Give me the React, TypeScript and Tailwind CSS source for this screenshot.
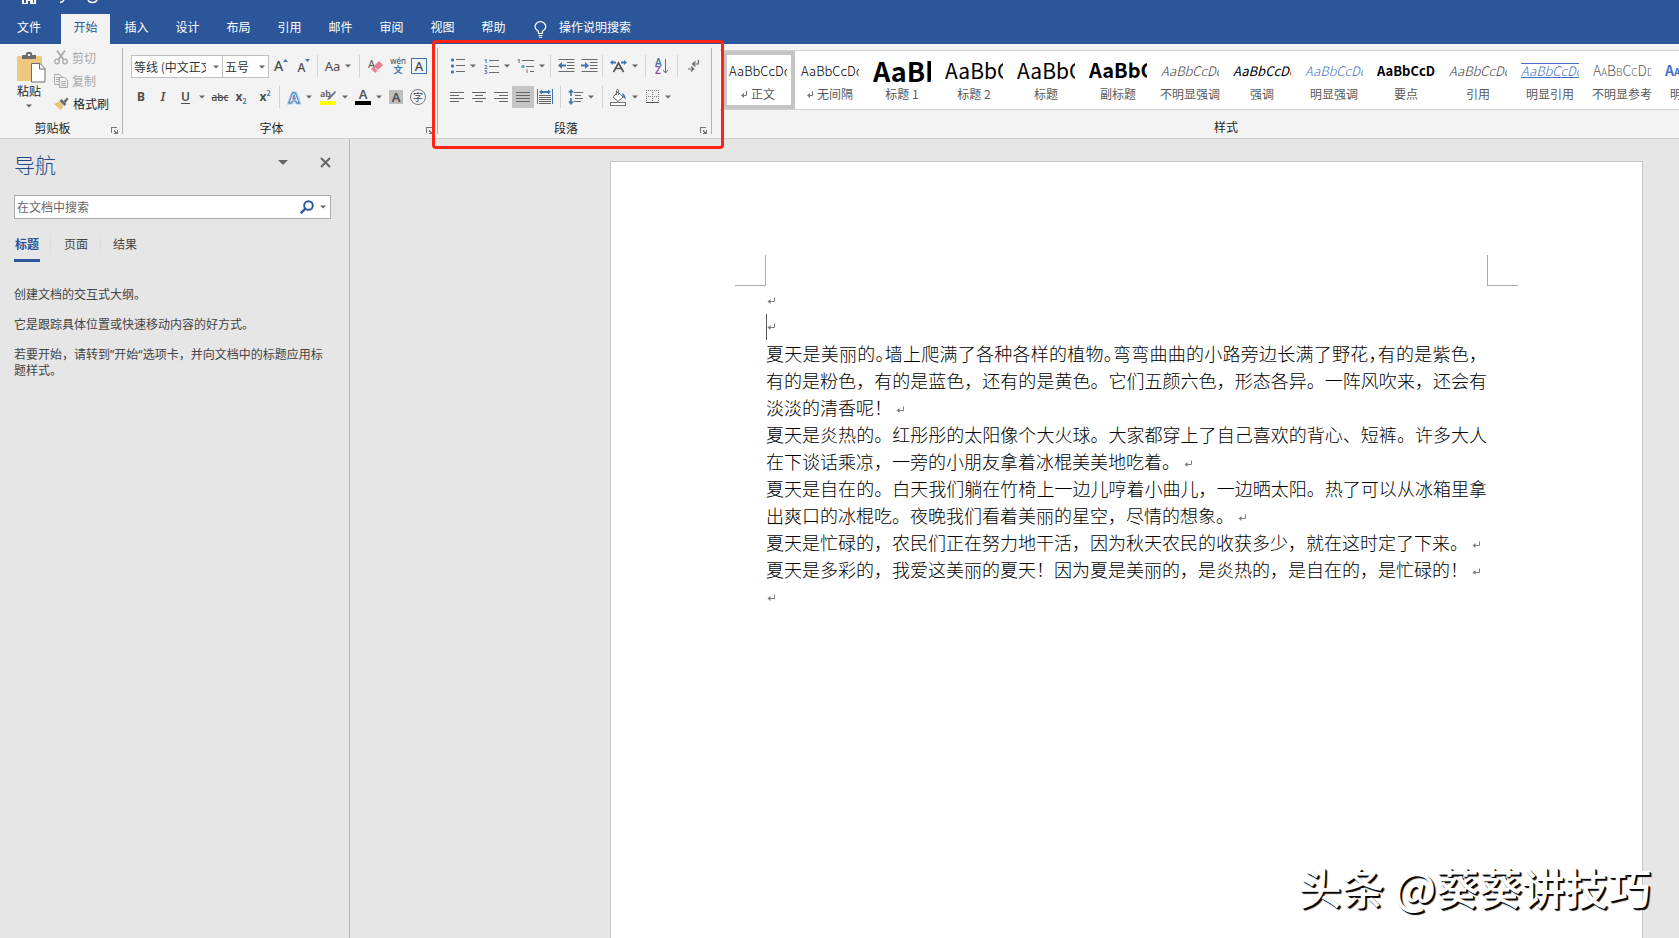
import type { ReactNode } from "react";

const BLUE = "#3f76b0";
const GREY = "#6a6a6a";

function Caret({ className = "" }: { className?: string }) {
  return (
    <svg width="6" height="4" viewBox="0 0 6 4" className={`shrink-0 ${className}`} aria-hidden="true">
      <path d="M0 0.5h6L3 3.5z" fill="#666" />
    </svg>
  );
}

function Tool({ label, width, children, split, active }: { label: string; width: string; children: ReactNode; split?: boolean; active?: boolean }) {
  return (
    <button
      type="button"
      aria-label={label}
      className={`flex h-[22px] shrink-0 items-center justify-center ${split ? "gap-[5px]" : ""} ${width} ${active ? "bg-[#c5c5c5]" : ""}`}
    >
      {children}
      {split && <Caret />}
    </button>
  );
}

function Sep({ width = "w-1" }: { width?: string }) {
  return (
    <span className={`flex h-[22px] shrink-0 justify-center ${width}`}>
      <span className="w-px bg-[#d2d2d2]" />
    </span>
  );
}

function Launcher({ label }: { label: string }) {
  return (
    <button type="button" aria-label={label} className="mr-1 mt-1 shrink-0">
      <svg width="7" height="7" viewBox="0 0 7 7" shapeRendering="crispEdges" aria-hidden="true">
        <path d="M0 0h6v1H1v5H0z" fill="#777" />
        <path d="M3 3h1v1h1v1h1V3h1v4H3V6h1V5H3z" fill="#777" />
      </svg>
    </button>
  );
}

function GroupLabel({ children }: { children: string }) {
  return (
    <div className="flex h-[18px] shrink-0 items-center">
      <span className="flex-1 pr-[6px] text-center">{children}</span>
      <Launcher label={`${children}设置`} />
    </div>
  );
}

function LinesIcon({ rows, width = 14 }: { rows: [number, number][]; width?: number }) {
  return (
    <svg width={width} height="14" viewBox={`0 0 ${width} 14`} shapeRendering="crispEdges" aria-hidden="true">
      {rows.map(([x, w], i) => (
        <rect key={i} x={x} y={2 + i * 3} width={w} height="1" fill="#666" />
      ))}
    </svg>
  );
}

function ListIcon({ kind }: { kind: "bullet" | "number" | "multi" }) {
  if (kind === "bullet") {
    return (
      <svg width="14" height="16" viewBox="0 0 14 16" aria-hidden="true">
        {[2, 8, 14].map((y) => (
          <g key={y}>
            <rect x="0" y={y - 1.5} width="3" height="3" rx="1" fill={BLUE} />
            <rect x="5" y={y - 1} width="9" height="1" fill={GREY} />
          </g>
        ))}
      </svg>
    );
  }
  if (kind === "number") {
    return (
      <svg width="15" height="16" viewBox="0 0 15 16" aria-hidden="true">
        {["1", "2", "3"].map((n, i) => (
          <g key={n}>
            <text x="0" y={5 + i * 5.5} fontSize="6" fontWeight="700" fontFamily="Noto Sans, sans-serif" fill={BLUE}>{n}</text>
            <rect x="5" y={2 + i * 6} width="10" height="1" fill={GREY} />
          </g>
        ))}
      </svg>
    );
  }
  return (
    <svg width="17" height="16" viewBox="0 0 17 16" aria-hidden="true">
      <g fontSize="6" fontWeight="700" fontFamily="Noto Sans, sans-serif" fill={BLUE}>
        <text x="0" y="5">1</text>
        <text x="4" y="10">a</text>
        <text x="9" y="15">i</text>
      </g>
      <path d="M5 2.500h12M9 8.500h8M13 13.500h4" stroke={GREY} />
    </svg>
  );
}

function IndentIcon({ out }: { out?: boolean }) {
  return (
    <svg width="17" height="14" viewBox="0 0 17 14" aria-hidden="true">
      <path d="M0.500 0.500h16M9 3.500h7.500M9 6.500h7.500M9 9.500h7.500M0.500 12.500h16" stroke={GREY} />
      {out ? <path d="M0 6.500l4-3.500v2.500h4v2H4V10z" fill={BLUE} /> : <path d="M8 6.500L4 3v2.500H0v2h4V10z" fill={BLUE} />}
    </svg>
  );
}

function ParagraphMark({ className = "" }: { className?: string }) {
  return (
    <svg width="8" height="8" viewBox="0 0 8 8" className={`inline-block ${className}`} aria-hidden="true">
      <path d="M7.500 0.500v4H2" fill="none" stroke="#7d7d7d" />
      <path d="M0.500 4.500L3.500 2v5z" fill="#7d7d7d" />
    </svg>
  );
}

const tabs = ["插入", "设计", "布局", "引用", "邮件", "审阅", "视图", "帮助"];

const styleItems: { name: string; sample: string; mark?: boolean }[] = [
  { name: "正文", sample: "text-[13px] font-light text-black", mark: true },
  { name: "无间隔", sample: "text-[13px] font-light text-black", mark: true },
  { name: "标题 1", sample: "text-[27px] font-bold text-black" },
  { name: "标题 2", sample: "text-[21px] font-normal text-black" },
  { name: "标题", sample: "text-[21px] font-normal text-black" },
  { name: "副标题", sample: "text-[20px] font-bold text-black" },
  { name: "不明显强调", sample: "text-[13px] font-light italic text-[#404040]" },
  { name: "强调", sample: "text-[13px] font-normal italic text-black" },
  { name: "明显强调", sample: "text-[13px] font-light italic text-[#4472c4]" },
  { name: "要点", sample: "text-[13px] font-bold text-black" },
  { name: "引用", sample: "text-[13px] font-light italic text-[#404040]" },
  { name: "明显引用", sample: "text-[13px] font-light italic text-[#4472c4] border-y border-[#4472c4]" },
  { name: "不明显参考", sample: "text-[14px] font-light text-[#5a5a5a] [font-variant-caps:small-caps]" },
  { name: "明显参考", sample: "text-[14px] font-bold text-[#4472c4] [font-variant-caps:small-caps]" },
];

function Half({ children }: { children: string }) {
  return <span className="[font-feature-settings:'halt']">{children}</span>;
}

function TitleAndTabs() {
  return (
    <header className="bg-[#2b579a] text-white">
      <div className="flex h-[14px] items-start pl-[22px]">
        <svg width="80" height="4" viewBox="0 0 80 4" aria-hidden="true">
          <path d="M0 0h2v3h2V0h7v3h1V0h2v4H0z" fill="#fff" />
          <rect x="6" y="1" width="2" height="3" fill="#2b579a" />
          <path d="M42 0q-1 2-4 2.500" fill="none" stroke="#fff" strokeWidth="1.500" />
          <path d="M66 0q1 2.500 4.500 2.500T75 0" fill="none" stroke="#fff" strokeWidth="1.500" />
        </svg>
      </div>
      <nav className="flex h-[30px] items-stretch gap-[2px]">
        <button type="button" className="w-[59px] pb-1 pr-px">文件</button>
        <button type="button" className="w-[49px] bg-[#f3f3f3] pb-1 text-[#2b579a]">开始</button>
        {tabs.map((t) => (
          <button key={t} type="button" className="w-[49px] pb-1">{t}</button>
        ))}
        <button type="button" className="ml-[6px] flex items-center gap-3 px-2 pb-1">
          <svg width="13" height="17" viewBox="0 0 13 17" fill="none" stroke="#fff" className="mt-1" aria-hidden="true">
            <path d="M4.500 12.500V10.500C3 9 1 8 1 5.800A5.300 5 0 0 1 11.800 5.800C11.800 8 9.800 9 8.300 10.500v2z" strokeWidth="1.200" />
            <path d="M4.500 14.500h4M5 16.300h3" />
          </svg>
          操作说明搜索
        </button>
      </nav>
    </header>
  );
}

function ClipboardGroup() {
  return (
    <section className="mb-1 mt-1 flex w-[123px] shrink-0 flex-col border-r border-[#b1b1b1]">
      <div className="flex h-[71px] shrink-0">
        <button type="button" className="flex w-[54px] flex-col items-center pl-2 pt-1">
          <svg width="29" height="32" viewBox="0 0 29 32" className="shrink-0" aria-hidden="true">
            <rect x="0" y="4" width="25" height="25" rx="1" fill="#edc87e" />
            <path d="M5 7V3h4V1.500Q9 0 10.500 0h3Q15 0 15 1.500V3h4v4z" fill="#6d6d6d" />
            <rect x="11" y="2" width="2" height="2" fill="#f3f3f3" />
            <path d="M14.500 11.500h8.500l5 5v13.500H14.500z" fill="#fff" stroke="#6d6d6d" />
            <path d="M22.500 11.500v5.500H28" fill="none" stroke="#6d6d6d" />
          </svg>
          <span className="-mt-[2px] mr-1 leading-[18px]">粘贴</span>
          <Caret className="mr-1 mt-1" />
        </button>
        <div className="-mt-[2px] flex flex-col text-[#262626]">
          <button type="button" className="flex h-[23px] items-center gap-1 text-[#a9a9a9]">
            <svg width="14" height="15" viewBox="0 0 14 15" fill="none" stroke="#a9a9a9" aria-hidden="true">
              <path d="M3 0.500L9.500 9.500M11 0.500L4.500 9.500" strokeWidth="1.800" />
              <circle cx="3" cy="11.500" r="2.300" strokeWidth="1.300" />
              <circle cx="11" cy="11.500" r="2.300" strokeWidth="1.300" />
            </svg>
            剪切
          </button>
          <button type="button" className="flex h-[23px] items-center gap-1 text-[#a9a9a9]">
            <svg width="14" height="14" viewBox="0 0 14 14" fill="#f3f3f3" stroke="#a9a9a9" aria-hidden="true">
              <path d="M0.500 0.500h5l2.500 2v8H0.500zM2 3.500h4M2 5.500h3M2 7.500h3" />
              <path d="M5.500 3.500h5l3 2.500v7.500h-8zM7 7.500h5M7 9.500h5M7 11.500h5" />
            </svg>
            复制
          </button>
          <button type="button" className="flex h-[23px] items-center gap-1">
            <svg width="15" height="14" viewBox="0 0 15 14" aria-hidden="true">
              <path d="M0 7l5.500-2.500 4 4.500L7 13.500z" fill="#edc27c" />
              <path d="M5.500 4L7.500 2l5 5-2 2z" fill="#6d6d6d" />
              <path d="M9.500 4L13 0.500l1.500 1.500L11.500 6z" fill="#6d6d6d" />
            </svg>
            格式刷
          </button>
        </div>
      </div>
      <GroupLabel>剪贴板</GroupLabel>
    </section>
  );
}

function FontGroup() {
  const glyph = "font-['Noto_Sans'] text-[#4d4d4d] leading-none";
  return (
    <section className="mb-1 mt-1 flex w-[315px] shrink-0 flex-col border-r border-[#b1b1b1]">
      <div className="flex h-[71px] shrink-0 flex-col gap-[8px] pl-2 pt-[7px]">
        <div className="flex h-[23px] items-start">
          <span className="relative flex shrink-0 items-center">
            <select aria-label="字体" className="h-[23px] w-[92px] appearance-none border border-[#bfbfbf] bg-white pl-[2px] pr-4 text-[#333]">
              <option>等线 (中文正文)</option>
            </select>
            <Caret className="pointer-events-none absolute right-1" />
          </span>
          <span className="relative -ml-px flex shrink-0 items-center">
            <select aria-label="字号" className="h-[23px] w-[47px] appearance-none border border-[#bfbfbf] bg-white pl-[2px] pr-4 text-[#333]">
              <option>五号</option>
            </select>
            <Caret className="pointer-events-none absolute right-1" />
          </span>
          <Tool label="增大字号" width="w-6">
            <span className={`${glyph} text-[14px] font-medium`}>A</span>
            <svg width="5" height="3" viewBox="0 0 5 3" className="mb-[11px]" aria-hidden="true"><path d="M0 3h5L2.500 0z" fill={BLUE} /></svg>
          </Tool>
          <Tool label="减小字号" width="w-[22px]">
            <span className={`${glyph} mt-1 text-[12px] font-medium`}>A</span>
            <svg width="5" height="3" viewBox="0 0 5 3" className="mb-[11px]" aria-hidden="true"><path d="M0 0h5L2.500 3z" fill={BLUE} /></svg>
          </Tool>
          <Sep />
          <Tool label="更改大小写" width="w-[38px]" split>
            <span className={`${glyph} text-[13px]`}>Aa</span>
          </Tool>
          <Sep />
          <Tool label="清除所有格式" width="w-7">
            <svg width="15" height="16" viewBox="0 0 15 16" aria-hidden="true">
              <text x="0" y="10" fontSize="11" fontFamily="Noto Sans, sans-serif" fill="#555">A</text>
              <path d="M11 3l4 4-5 5-4-4z" fill="#e77e8f" />
              <path d="M5.500 8.500l4 4L7.500 15 3 11z" fill="#e77e8f" />
            </svg>
          </Tool>
          <Tool label="拼音指南" width="w-[18px]">
            <svg width="18" height="20" viewBox="0 0 18 20" className="shrink-0" aria-hidden="true">
              <text x="9" y="8" textAnchor="middle" fontSize="8" fontFamily="Noto Sans, sans-serif" fill="#444">wén</text>
              <text x="9" y="17" textAnchor="middle" fontSize="9" fontWeight="700" fontFamily="Noto Sans CJK SC, sans-serif" fill={BLUE}>文</text>
            </svg>
          </Tool>
          <Tool label="字符边框" width="w-6">
            <span className={`${glyph} flex size-4 items-center justify-center border border-[#3f76b0] text-[13px] font-medium`}>A</span>
          </Tool>
        </div>
        <div className="flex h-[23px] items-start">
          <Tool label="加粗" width="w-5"><span className={`${glyph} text-[12px] font-bold`}>B</span></Tool>
          <Tool label="倾斜" width="w-6"><span className={`${glyph} text-[12px] font-semibold italic`}>I</span></Tool>
          <Tool label="下划线" width="w-9" split><span className={`${glyph} mr-1 border-b border-[#4d4d4d] text-[12px] font-semibold`}>U</span></Tool>
          <Tool label="删除线" width="w-[18px]"><span className={`${glyph} text-[10px] font-medium line-through`}>abc</span></Tool>
          <Tool label="下标" width="w-6">
            <span className={`${glyph} text-[12px] font-bold`}>x</span>
            <span className="mt-2 text-[7px] font-bold leading-none text-[#3f76b0]">2</span>
          </Tool>
          <Tool label="上标" width="w-6">
            <span className={`${glyph} text-[12px] font-bold`}>x</span>
            <span className="mb-2 text-[7px] font-bold leading-none text-[#3f76b0]">2</span>
          </Tool>
          <Sep />
          <Tool label="文本效果" width="w-9" split>
            <svg width="14" height="15" viewBox="0 0 14 15" aria-hidden="true">
              <text x="7" y="13" textAnchor="middle" fontSize="15" fontWeight="700" fontFamily="Noto Sans, sans-serif" fill="#fff" stroke="#a9c9e8" strokeWidth="3" paintOrder="stroke">A</text>
              <text x="7" y="13" textAnchor="middle" fontSize="15" fontWeight="700" fontFamily="Noto Sans, sans-serif" fill="#fff" stroke={BLUE} strokeWidth="0.900">A</text>
            </svg>
          </Tool>
          <Tool label="突出显示" width="w-[34px]" split>
            <svg width="17" height="16" viewBox="0 0 17 16" aria-hidden="true">
              <text x="0" y="8" fontSize="9" fontWeight="600" fontFamily="Noto Sans, sans-serif" fill="#555">ab</text>
              <path d="M15 2L9 8l-2 3 3-1 6-7z" fill="#6d6d6d" />
              <rect x="0" y="12" width="16" height="4" fill="#ff0" />
            </svg>
          </Tool>
          <Tool label="字体颜色" width="w-[34px]" split>
            <svg width="16" height="16" viewBox="0 0 16 16" aria-hidden="true">
              <text x="8" y="10" textAnchor="middle" fontSize="13" fontWeight="600" fontFamily="Noto Sans, sans-serif" fill="#555">A</text>
              <rect x="0" y="12" width="16" height="4" fill="#000" />
            </svg>
          </Tool>
          <Tool label="字符底纹" width="w-[22px]">
            <span className={`${glyph} flex size-[14px] items-center justify-center bg-[#bdbdbd] text-[13px] font-semibold`}>A</span>
          </Tool>
          <Tool label="带圈字符" width="w-[22px]">
            <span className="flex size-4 shrink-0 items-center justify-center rounded-full border border-[#777] text-[10px] leading-none text-[#444]">字</span>
          </Tool>
        </div>
      </div>
      <GroupLabel>字体</GroupLabel>
    </section>
  );
}

function ParagraphGroup() {
  return (
    <section className="relative mb-1 mt-1 flex w-[274px] shrink-0 flex-col border-r border-[#b1b1b1]">
      <div className="pointer-events-none absolute -bottom-[15px] -left-[6px] -right-[13px] -top-2 z-10 rounded border-[3px] border-[#ff2316]" />
      <div className="flex h-[71px] shrink-0 flex-col gap-[8px] pl-2 pt-[7px]">
        <div className="flex h-[23px] items-start">
          <Tool label="项目符号" width="w-[34px]" split><ListIcon kind="bullet" /></Tool>
          <Tool label="编号" width="w-[34px]" split><ListIcon kind="number" /></Tool>
          <Tool label="多级列表" width="w-[34px]" split><ListIcon kind="multi" /></Tool>
          <Sep width="w-[5px]" />
          <Tool label="减少缩进量" width="w-[26px]"><IndentIcon out /></Tool>
          <Tool label="增加缩进量" width="w-5"><IndentIcon /></Tool>
          <Sep width="w-[7px]" />
          <Tool label="中文版式" width="w-9" split>
            <svg width="17" height="14" viewBox="0 0 17 14" aria-hidden="true">
              <path d="M3.500 13L8.500 4l5 9M5.500 9.500h6" fill="none" stroke="#555" strokeWidth="1.700" />
              <path d="M0 3.500L3 1v1.500h3v2H3V6zM17 3.500L14 1v1.500h-3v2h3V6z" fill={BLUE} />
            </svg>
          </Tool>
          <Sep width="w-[7px]" />
          <Tool label="排序" width="w-[26px]">
            <svg width="14" height="17" viewBox="0 0 14 17" aria-hidden="true">
              <text x="0" y="8" fontSize="10" fontWeight="600" fontFamily="Noto Sans, sans-serif" fill={BLUE}>A</text>
              <text x="0" y="16" fontSize="10" fontWeight="600" fontFamily="Noto Sans, sans-serif" fill="#8a50b0">Z</text>
              <path d="M10.500 1v14M8 12l2.500 3 2.500-3" fill="none" stroke={GREY} />
            </svg>
          </Tool>
          <Sep width="w-[5px]" />
          <Tool label="显示编辑标记" width="w-[26px]">
            <svg width="11" height="12" viewBox="0 0 11 12" fill="none" stroke="#666" strokeWidth="1.200" aria-hidden="true">
              <path d="M10.400 0v4H5M7.500 1.500L4.500 4l3 2.500M0 9h5M3 6.500L5.700 9 3 11.500" />
            </svg>
          </Tool>
        </div>
        <div className="flex h-[23px] items-start">
          <Tool label="左对齐" width="w-[22px]"><LinesIcon rows={[[0, 14], [0, 9], [0, 14], [0, 9]]} /></Tool>
          <Tool label="居中" width="w-[22px]"><LinesIcon rows={[[0, 14], [3, 8], [0, 14], [3, 8]]} /></Tool>
          <Tool label="右对齐" width="w-[22px]"><LinesIcon rows={[[0, 14], [5, 9], [0, 14], [5, 9]]} /></Tool>
          <Tool label="两端对齐" width="w-[22px]" active><LinesIcon rows={[[0, 14], [0, 14], [0, 14], [0, 14]]} /></Tool>
          <Tool label="分散对齐" width="w-[22px]">
            <svg width="16" height="16" viewBox="0 0 16 16" aria-hidden="true">
              <path d="M0.500 0v15M15.500 0v15" stroke={BLUE} />
              <path d="M2 3l3-2.500V2h6V0.500L14 3l-3 2.500V4H5v1.500z" fill={BLUE} />
              <path d="M2 6.500h12M2 8.500h12M2 10.500h12M2 12.500h12M2 14.500h12" stroke="#666" />
            </svg>
          </Tool>
          <Sep width="w-2" />
          <Tool label="行距" width="w-[34px]" split>
            <svg width="15" height="16" viewBox="0 0 15 16" aria-hidden="true">
              <path d="M3 0l3 3.500H3.800V7H2.200V3.500H0zM3 16l3-3.500H3.800V9H2.200v3.500H0z" fill={BLUE} />
              <path d="M6 3.500h9M7 6.500h6M7 9.500h8M6 12.500h7" stroke={GREY} />
            </svg>
          </Tool>
          <Sep width="w-2" />
          <Tool label="底纹" width="w-[35px]" split>
            <svg width="17" height="17" viewBox="0 0 17 17" aria-hidden="true">
              <path d="M3 8l5-5 5 5-5 4.500z" fill="#fff" stroke={GREY} />
              <path d="M6.500 6V1.500Q6.500 0.500 7.500 0.500T8.500 1.500V6" fill="none" stroke={GREY} />
              <path d="M12 4q4 1.500 3.500 6.500L13 8z" fill={BLUE} />
              <rect x="0.500" y="13.500" width="15" height="3" fill="#fff" stroke="#777" />
            </svg>
          </Tool>
          <Tool label="边框" width="w-[35px]" split>
            <svg width="14" height="14" viewBox="0 0 14 14" aria-hidden="true">
              <path d="M0 0.500h13M0 6.500h13M0.500 0v13M6.500 0v13M12.500 0v13" stroke="#777" strokeDasharray="1 1" />
              <path d="M0 12.500h13" stroke="#555" />
            </svg>
          </Tool>
        </div>
      </div>
      <GroupLabel>段落</GroupLabel>
    </section>
  );
}

function StylesGroup() {
  return (
    <section className="flex min-w-0 flex-1 flex-col overflow-hidden pt-[6px]">
      <div className="ml-2 flex h-[60px] shrink-0 border-y border-[#d0d0d0] bg-white pl-[3px]">
        {styleItems.map((s, i) => (
          <button
            key={s.name}
            type="button"
            className={`flex h-[58px] w-[72px] shrink-0 flex-col items-center border-4 pr-[2px] ${i === 0 ? "border-[#c5c5c5]" : "border-transparent"}`}
          >
            <span className="mt-px flex h-7 w-[58px] shrink-0 items-center">
              <span className={`w-full overflow-hidden whitespace-nowrap text-left leading-none ${s.sample}`}>AaBbCcDd</span>
            </span>
            <span className="flex h-5 items-center gap-1 whitespace-nowrap text-[#5a5a5a]">
              {s.mark && (
                <svg width="6" height="7" viewBox="0 0 6 7" aria-hidden="true">
                  <path d="M5.500 0v4.500H2" fill="none" stroke="#777" />
                  <path d="M0 4.500L3 2v5z" fill="#777" />
                </svg>
              )}
              {s.name}
            </span>
          </button>
        ))}
      </div>
      <div className="mt-2 flex h-[18px] items-center justify-center pl-[61px]">样式</div>
    </section>
  );
}

function NavPane() {
  return (
    <aside className="flex w-[350px] shrink-0 flex-col border-r border-[#b8b8b8] pl-[14px] pr-[18px] pt-[11px] text-[#444]">
      <div className="flex h-7 items-center">
        <h2 className="flex-1 text-[21px] font-light leading-7 text-[#1e4a8a]">导航</h2>
        <button type="button" aria-label="任务窗格选项" className="mb-1 mr-8">
          <svg width="10" height="5" viewBox="0 0 10 5" aria-hidden="true"><path d="M0 0h10L5 5z" fill="#666" /></svg>
        </button>
        <button type="button" aria-label="关闭" className="mb-1">
          <svg width="11" height="11" viewBox="0 0 11 11" aria-hidden="true"><path d="M1 1l9 9M10 1l-9 9" stroke="#666" strokeWidth="2" /></svg>
        </button>
      </div>
      <div className="mt-[17px] flex h-6 items-center border border-[#ababab] bg-white pr-1">
        <input aria-label="在文档中搜索" placeholder="在文档中搜索" className="h-full min-w-0 flex-1 bg-transparent pb-[2px] pl-[2px] outline-none placeholder:text-[#666]" />
        <button type="button" aria-label="搜索">
          <svg width="14" height="14" viewBox="0 0 14 14" fill="none" stroke="#2b579a" aria-hidden="true">
            <circle cx="8.500" cy="5.500" r="4.300" strokeWidth="1.900" />
            <path d="M5.500 8.500L0.800 13.200" strokeWidth="2.400" />
          </svg>
        </button>
        <button type="button" aria-label="搜索选项" className="ml-[6px]"><Caret /></button>
      </div>
      <div className="mt-[15px] flex h-7 items-stretch">
        <button type="button" className="w-[26px] border-b-[3px] border-[#2b579a] pb-[5px] font-bold text-[#2b579a]">标题</button>
        <span className="ml-[10px] h-5 w-px bg-[#dedede]" />
        <button type="button" className="ml-[13px] pb-2">页面</button>
        <span className="ml-3 h-5 w-px bg-[#dedede]" />
        <button type="button" className="ml-3 pb-2">结果</button>
      </div>
      <div className="mt-6 flex flex-col gap-[15px] leading-[15px]">
        <p>创建文档的交互式大纲。</p>
        <p>它是跟踪具体位置或快速移动内容的好方式。</p>
        <p>若要开始，请转到<span className="font-['Noto_Sans']">”</span>开始<span className="font-['Noto_Sans']">“</span>选项卡，并向文档中的标题应用标题样式。</p>
      </div>
    </aside>
  );
}

function DocumentPage() {
  return (
    <main className="relative flex min-w-0 flex-1 pl-[260px] pr-9 pt-[22px]">
      <article className="flex flex-1 flex-col border border-b-0 border-[#c6c6c6] bg-white pt-[93px] text-black">
        <div className="flex h-[31px] justify-between px-[124px]">
          <span className="w-[31px] border-b border-r border-[#ababab]" />
          <span className="w-[31px] border-b border-l border-[#ababab]" />
        </div>
        <div className="px-[155px] pt-px text-justify text-[18px] font-light leading-[27px]">
          <p className="flex h-[27px] items-center pl-px"><ParagraphMark /></p>
          <p className="flex h-[26px] items-center border-l border-[#555]"><ParagraphMark /></p>
          <p>
            夏天是美丽的<Half>。</Half>墙上爬满了各种各样的植物<Half>。</Half>弯弯曲曲的小路旁边长满了野花<Half>，</Half>有的是紫色，有的是粉色，有的是蓝色，还有的是黄色。它们五颜六色，形态各异。一阵风吹来，还会有淡淡的清香呢！
            <ParagraphMark className="ml-1" />
          </p>
          <p>
            夏天是炎热的。红彤彤的太阳像个大火球。大家都穿上了自己喜欢的背心、短裤。许多大人在下谈话乘凉，一旁的小朋友拿着冰棍美美地吃着。
            <ParagraphMark className="ml-1" />
          </p>
          <p>
            夏天是自在的。白天我们躺在竹椅上一边儿哼着小曲儿，一边晒太阳。热了可以从冰箱里拿出爽口的冰棍吃。夜晚我们看着美丽的星空，尽情的想象。
            <ParagraphMark className="ml-1" />
          </p>
          <p>
            夏天是忙碌的，农民们正在努力地干活，因为秋天农民的收获多少，就在这时定了下来。
            <ParagraphMark className="ml-1" />
          </p>
          <p>
            夏天是多彩的，我爱这美丽的夏天！因为夏是美丽的，是炎热的，是自在的，是忙碌的！
            <ParagraphMark className="ml-1" />
          </p>
          <p className="flex h-[29px] items-center pl-px"><ParagraphMark /></p>
        </div>
      </article>
      <div className="pointer-events-none absolute bottom-7 right-7 whitespace-nowrap text-[43px] font-medium leading-[48px] text-white [text-shadow:2px_2px_1px_#000,1px_1px_0_#000]">
        头条 @葵葵讲技巧
      </div>
    </main>
  );
}

export default function App() {
  return (
    <div className="flex h-screen flex-col overflow-hidden bg-[#e6e6e6] font-['Noto_Sans_CJK_SC',sans-serif] text-[12px] leading-4 text-[#262626]">
      <TitleAndTabs />
      <div className="flex h-[95px] shrink-0 border-b border-[#d0d0d0] bg-[#f3f3f3]">
        <ClipboardGroup />
        <FontGroup />
        <ParagraphGroup />
        <StylesGroup />
      </div>
      <div className="flex min-h-0 flex-1">
        <NavPane />
        <DocumentPage />
      </div>
    </div>
  );
}
